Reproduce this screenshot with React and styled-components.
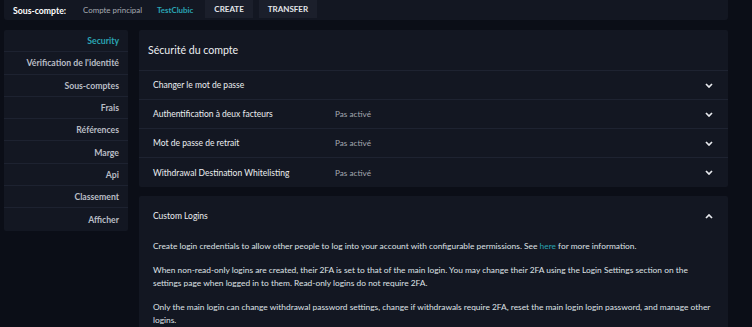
import styled, { createGlobalStyle } from "styled-components";

const GlobalStyle = createGlobalStyle`
  body {
    margin: 0;
    background: #0b0e17;
    font-family: Lato, "Noto Sans", sans-serif;
  }
  * { box-sizing: border-box; }
`;

const menu = [
  "Security",
  "Vérification de l'identité",
  "Sous-comptes",
  "Frais",
  "Références",
  "Marge",
  "Api",
  "Classement",
  "Afficher",
];

const settings = [
  { label: "Changer le mot de passe", value: "" },
  { label: "Authentification à deux facteurs", value: "Pas activé" },
  { label: "Mot de passe de retrait", value: "Pas activé" },
  { label: "Withdrawal Destination Whitelisting", value: "Pas activé" },
];

function Chevron({ up }) {
  return (
    <svg width="8" height="5" viewBox="0 0 8 5">
      <polyline
        points={up ? "1,4 4,1 7,4" : "1,1 4,4 7,1"}
        fill="none"
        stroke="#e8eaee"
        strokeWidth="1.7"
      />
    </svg>
  );
}

export default function App() {
  return (
    <Page>
      <GlobalStyle />
      <TopBar>
        <Title>Sous-compte:</Title>
        <Account>Compte principal</Account>
        <Account active>TestClubic</Account>
        <BarButton>CREATE</BarButton>
        <BarButton>TRANSFER</BarButton>
      </TopBar>
      <Body>
        <Sidebar>
          {menu.map((m, i) => (
            <MenuItem key={m} active={i === 0}>
              {m}
            </MenuItem>
          ))}
        </Sidebar>
        <Main>
          <Card>
            <CardTitle>Sécurité du compte</CardTitle>
            {settings.map((s) => (
              <Row key={s.label}>
                <Label>{s.label}</Label>
                <Value>{s.value}</Value>
                <Chevron />
              </Row>
            ))}
          </Card>
          <Card>
            <Row tall>
              <Label>Custom Logins</Label>
              <Value />
              <Chevron up />
            </Row>
            <Text>
              <p>
                Create login credentials to allow other people to log into your
                account with configurable permissions. See <a>here</a> for more
                information.
              </p>
              <p>
                When non-read-only logins are created, their 2FA is set to that
                of the main login. You may change their 2FA using the Login
                Settings section on the settings page when logged in to them.
                Read-only logins do not require 2FA.
              </p>
              <p>
                Only the main login can change withdrawal password settings,
                change if withdrawals require 2FA, reset the main login login
                password, and manage other logins.
              </p>
            </Text>
          </Card>
        </Main>
      </Body>
    </Page>
  );
}

const Page = styled.div`
  width: 752px;
  height: 327px;
  overflow: hidden;
  padding: 0 24px 0 4px;
`;

const TopBar = styled.div`
  height: 20px;
  background: #131722;
  display: flex;
  align-items: stretch;
  padding-left: 9px;
  border-radius: 0 0 3px 3px;
`;

const Title = styled.div`
  display: flex;
  align-items: center;
  font-size: 8.7px;
  font-weight: 700;
  color: #ffffff;
  margin-right: 17px;
`;

const Account = styled.div`
  display: flex;
  align-items: center;
  font-size: 7.9px;
  font-weight: ${(p) => (p.active ? 700 : 400)};
  color: ${(p) => (p.active ? "#2aa5b4" : "#a7abb3")};
  margin-right: ${(p) => (p.active ? "12px" : "15px")};
`;

const BarButton = styled.div`
  display: flex;
  align-items: center;
  height: 18px;
  padding: 0 9px;
  margin-right: 6px;
  background: #1b1f2b;
  color: #e4e6ea;
  font-size: 8px;
  font-weight: 700;
`;

const Body = styled.div`
  display: flex;
  gap: 11px;
  margin-top: 10px;
`;

const Sidebar = styled.div`
  width: 124px;
  flex-shrink: 0;
  align-self: flex-start;
  background: #131722;
  border-radius: 2px;
`;

const MenuItem = styled.div`
  height: 22.3px;
  display: flex;
  align-items: center;
  justify-content: flex-end;
  padding-right: 9px;
  font-size: 8.7px;
  font-weight: 700;
  color: ${(p) => (p.active ? "#2aa5b4" : "#b9bdc5")};
  border-bottom: 1px solid #1d2230;
  &:last-child { border-bottom: none; }
`;

const Main = styled.div`
  flex: 1;
  display: flex;
  flex-direction: column;
  gap: 9px;
`;

const Card = styled.div`
  background: #131722;
  border-radius: 2px;
`;

const CardTitle = styled.div`
  height: 41px;
  display: flex;
  align-items: center;
  padding-left: 9px;
  font-size: 10.6px;
  color: #eceef1;
  border-bottom: 1px solid #1e2331;
`;

const Row = styled.div`
  height: ${(p) => (p.tall ? "40px" : "29px")};
  display: grid;
  grid-template-columns: 182px 1fr auto;
  align-items: center;
  padding: 0 15px 0 14px;
  border-bottom: 1px solid #1e2331;
  &:last-child { border-bottom: none; }
  ${(p) => p.tall && "border-bottom: none;"}
`;

const Label = styled.div`
  font-size: 8.5px;
  color: #eceef1;
`;

const Value = styled.div`
  font-size: 8.2px;
  color: #a3a7af;
`;

const Text = styled.div`
  padding: 4px 15px 0 14px;
  font-size: 8.4px;
  line-height: 13px;
  color: #dfe1e5;
  p { margin: 0 0 11px; }
  a { color: #2aa5b4; }
`;
